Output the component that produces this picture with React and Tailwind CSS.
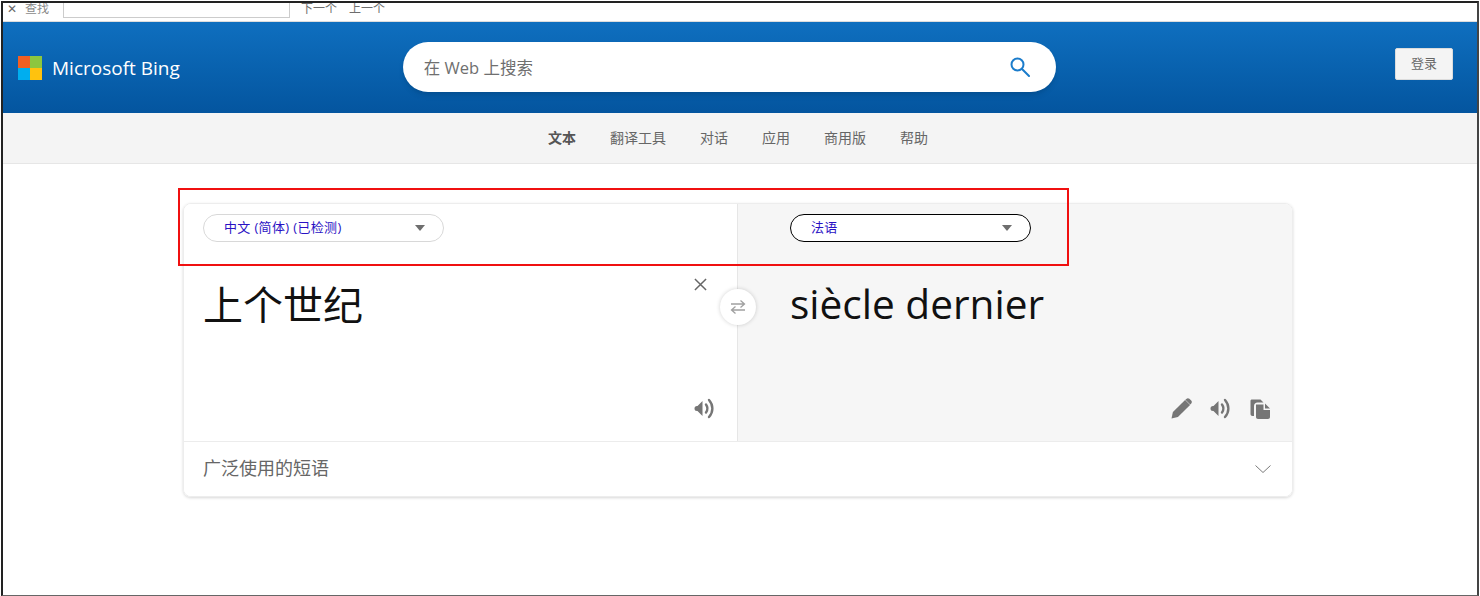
import React from 'react';

const FONT = "font-['Segoe_UI','Open_Sans','Noto_Sans_CJK_SC',sans-serif]";

const navItems = ['翻译工具', '对话', '应用', '商用版', '帮助'];

const SpeakerIcon = ({ className }) => (
  <svg viewBox="0.5 0 22 21" className={className} fill="none">
    <path d="M1 10.500Q1 8 3.500 8H4L9 3V18L4 13H3.500Q1 13 1 10.500Z" fill="#767676" />
    <path d="M12.500 6.500c1.800 2.500 1.800 5.500 0 8" stroke="#767676" strokeWidth="2.400" strokeLinecap="round" />
    <path d="M15.500 2c4.500 5 4.500 12 0 17" stroke="#767676" strokeWidth="2.400" strokeLinecap="round" />
  </svg>
);

const LanguageSelect = ({ label, dark }) => (
  <div className={`flex h-7 w-[241px] shrink-0 items-center justify-between rounded-full border bg-white pl-5 pr-[18px] ${dark ? 'border-black' : 'border-[#d8d8d8]'}`}>
    <span className="text-[13px] tracking-[0.35px] text-[#2a12c4]">{label}</span>
    <span className="h-0 w-0 border-x-[5px] border-t-[6px] border-x-transparent border-t-[#6e6e6e]" />
  </div>
);

export default function App() {
  return (
    <div className="h-[596px] w-[1480px] bg-white pl-px pt-px">
      <div className={`relative flex h-[595px] w-[1478px] flex-col overflow-hidden border-t-2 border-r-2 border-b border-l-2 border-t-[#222] border-r-[#444] border-b-[#666] border-l-[#222] bg-white ${FONT}`}>
        {/* find bar, cut off at the top */}
        <div className="flex h-[19px] shrink-0 items-end overflow-hidden border-b border-[#ddd] pb-[6px] text-xs leading-none text-[#8a8a8a]">
          <span className="ml-1 w-[18px] text-[#666]">✕</span>
          <span>查找</span>
          <div className="ml-[14px] -mb-[3px] h-[20px] w-[227px] shrink-0 border border-t-0 border-[#ccc]" />
          <span className="ml-[11px] text-[#6d6d6d]">下一个</span>
          <span className="ml-3 text-[#6d6d6d]">上一个</span>
        </div>

        {/* bing header */}
        <header className="flex h-[91px] shrink-0 items-center bg-gradient-to-b from-[#0f6fbf] to-[#04559f] pr-6">
          <div className="ml-[15px] mt-px grid h-6 w-6 grid-cols-2 grid-rows-2">
            <span className="bg-[#f25f22]" />
            <span className="bg-[#8cc63f]" />
            <span className="bg-[#00aeef]" />
            <span className="bg-[#ffc20e]" />
          </div>
          <span className="ml-[10px] mt-px text-[19px] text-white">Microsoft Bing</span>
          <div className="mb-[2px] ml-[223px] flex h-[50px] w-[653px] items-center justify-between rounded-full bg-white pl-[21px] pr-[26px] shadow-md">
            <span className="pt-[3px] text-[16.500px] text-[#6f6f6f]">在 Web 上搜索</span>
            <svg viewBox="0 0 20 20" className="h-5 w-5" fill="none" stroke="#1b7ccb" strokeWidth="2">
              <circle cx="7.500" cy="7.500" r="6" />
              <path d="M12 12l7 7" strokeLinecap="round" />
            </svg>
          </div>
          <button className="mb-[7px] ml-auto h-8 w-[58px] rounded-[2px] border border-[#dcdcdc] bg-[#f4f4f4] text-[13px] text-[#666]">登录</button>
        </header>

        {/* nav */}
        <nav className="flex h-[51px] shrink-0 items-center justify-center gap-[34px] border-b border-[#e6e6e6] bg-[#f4f4f4] pr-1 text-sm text-[#666]">
          <span className="font-bold text-[#555]">文本</span>
          {navItems.map((item) => (
            <span key={item}>{item}</span>
          ))}
        </nav>

        {/* translator card */}
        <main className="ml-[180px] mt-[39px] w-[1110px] shrink-0 overflow-hidden rounded-lg border border-[#ededed] shadow-[0_1px_3px_rgba(0,0,0,0.16)]">
          <div className="flex h-[238px] border-b border-[#ececec]">
            <section className="flex w-[554px] flex-col border-r border-[#e6e6e6] bg-white pl-[19px] pr-[21px] pt-[10px]">
              <LanguageSelect label="中文 (简体) (已检测)" />
              <div className="mt-9 flex items-start justify-between">
                <span className="text-[40px] leading-[54px] text-[#111]">上个世纪</span>
                <svg viewBox="0 0 14 14" className="mr-[9px] h-[13px] w-[13px]" stroke="#666" strokeWidth="1.600">
                  <path d="M1 1l12 12M13 1L1 13" />
                </svg>
              </div>
              <div className="mb-[22px] mt-auto flex justify-end">
                <SpeakerIcon className="h-[21px] w-[22px]" />
              </div>
            </section>
            <section className="flex flex-1 flex-col bg-[#f6f6f6] pl-[52px] pr-[21px] pt-[10px]">
              <LanguageSelect label="法语" dark />
              <div className="mt-[35px] text-[40.600px] leading-[54px] text-[#111]">siècle dernier</div>
              <div className="mb-[22px] mt-auto flex items-center justify-end gap-[18px]">
                <svg viewBox="0.5 0.5 21 21" className="h-[21px] w-[21px]" fill="#767676">
                  <path d="M1 21l1.400-6.400L14.600 2.400 19.600 7.400 7.400 19.600z" />
                  <path d="M15.800 1.400c1-1 2.200-1 3.100-.1l1.800 1.800c.9.9.9 2.100-.1 3.100l-.9.9-4.800-4.800z" />
                </svg>
                <SpeakerIcon className="h-[21px] w-[22px]" />
                <svg viewBox="0.5 0 21 20" className="h-5 w-[21px]" fill="#767676">
                  <path d="M1 2c0-1 .5-1.500 1.500-1.500H11l3 3H8c-2 0-3.500 1.500-3.500 3.500v10H3c-1.200 0-2-.8-2-2z" />
                  <path d="M6.500 5.500H14V11h6.500v7c0 1.200-.8 2-2 2H8.500c-1.200 0-2-.8-2-2z" />
                  <path d="M15.500 4.500l5 5h-5z" />
                </svg>
              </div>
            </section>
          </div>
          <div className="flex h-[54px] items-center justify-between bg-white pl-[19px] pr-[21px]">
            <span className="pb-[2px] text-lg text-[#666]">广泛使用的短语</span>
            <svg viewBox="0 0 16 8" className="h-2 w-4" fill="none" stroke="#7a7a7a" strokeWidth="1">
              <path d="M.5.500L8 7.500 15.500.5" />
            </svg>
          </div>
        </main>

        {/* swap button sits on the column divider */}
        <div className="absolute left-[717px] top-[286px] flex h-9 w-9 items-center justify-center rounded-full bg-white shadow-[0_0_4px_rgba(0,0,0,0.18)]">
          <svg viewBox="0 0 16 16" className="h-4 w-4" fill="none" stroke="#a0a0a0" strokeWidth="1.300">
            <path d="M1 5h13.500M10.500 1.500L14.500 5 10.500 8.500M15 11H1.500M5.500 7.500L1.500 11 5.500 14.500" />
          </svg>
        </div>

        {/* red annotation box */}
        <div className="absolute left-[175px] top-[185px] h-[78px] w-[891px] border-2 border-[#f01010]" />
      </div>
    </div>
  );
}
